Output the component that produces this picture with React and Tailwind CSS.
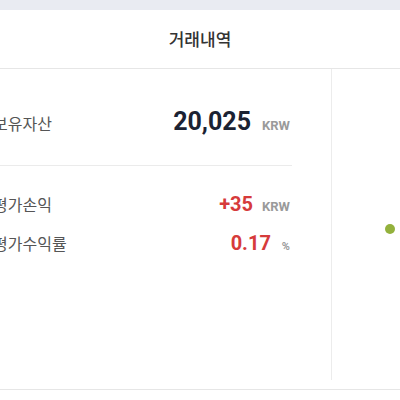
export default function App() {
  const kr = { fontFamily: '"Noto Sans CJK KR", "Noto Sans", sans-serif' };
  const num = { fontFamily: 'Roboto, "Liberation Sans", sans-serif' };
  return (
    <div className="w-[400px] h-[400px] bg-white overflow-hidden">
      <div className="h-[10px] bg-[#e9ebf2]" />
      <div className="h-[59px] flex items-center justify-center border-b border-[#e6e6e6]">
        <span style={kr} className="text-[17px] text-[#333] font-medium -mt-[1px]">거래내역</span>
      </div>
      <div className="flex h-[321px] border-b border-[#e6e6e6]">
        <div className="w-[332px] h-[311px] border-r border-[#ececec] flex flex-col">
          <div className="w-[292px]">
            <div className="flex items-baseline justify-between mt-[34px] h-[34px]">
              <span style={kr} className="text-[16px] text-[#555] -ml-[7px]">보유자산</span>
              <div className="flex items-baseline">
                <span style={num} className="text-[25px] font-bold text-[#1b2233]">20,025</span>
                <span style={num} className="text-[13px] font-bold text-[#9a9a9a] ml-[11px] mr-[2px]">KRW</span>
              </div>
            </div>
            <div className="h-px bg-[#ebebeb] mt-[28px]" />
            <div className="flex items-baseline justify-between mt-[23px] h-[24px]">
              <span style={kr} className="text-[16px] text-[#555] -ml-[7px]">평가손익</span>
              <div className="flex items-baseline">
                <span style={num} className="text-[20px] font-bold text-[#d63b3b]">+35</span>
                <span style={num} className="text-[13px] font-bold text-[#9a9a9a] ml-[9px] mr-[2px]">KRW</span>
              </div>
            </div>
            <div className="flex items-baseline justify-between mt-[15px] h-[26px]">
              <span style={kr} className="text-[16px] text-[#555] -ml-[7px]">평가수익률</span>
              <div className="flex items-baseline">
                <span style={num} className="text-[20px] font-bold text-[#d63b3b]">0.17</span>
                <span style={num} className="text-[11px] font-bold text-[#9a9a9a] ml-[11px] mr-[2px]">%</span>
              </div>
            </div>
          </div>
        </div>
        <div className="flex-1 pt-[155px] pl-[53px]">
          <div className="w-[10px] h-[10px] rounded-full bg-[#93b13c]" />
        </div>
      </div>
    </div>
  );
}
